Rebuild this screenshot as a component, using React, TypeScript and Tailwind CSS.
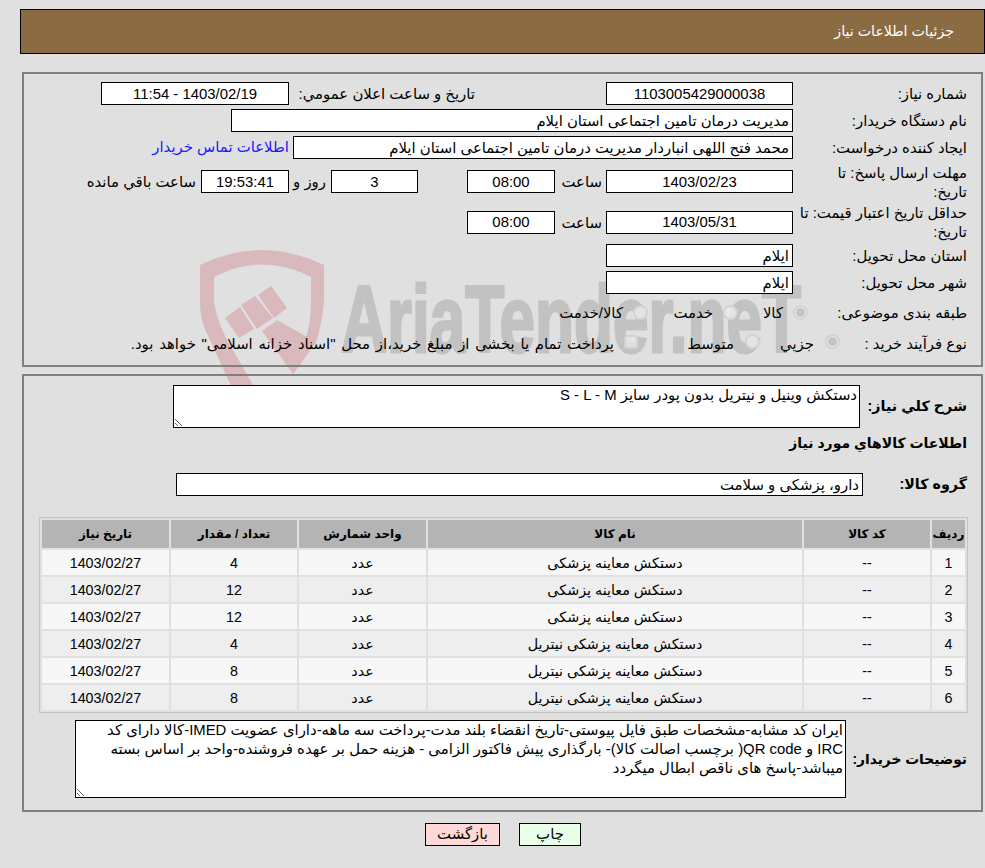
import React from 'react';

const items = [
  { id: 1, name: 'دستکش معاینه پزشکی', qty: 4 },
  { id: 2, name: 'دستکش معاینه پزشکی', qty: 12 },
  { id: 3, name: 'دستکش معاینه پزشکی', qty: 12 },
  { id: 4, name: 'دستکش معاینه پزشکی نیتریل', qty: 4 },
  { id: 5, name: 'دستکش معاینه پزشکی نیتریل', qty: 8 },
  { id: 6, name: 'دستکش معاینه پزشکی نیتریل', qty: 8 },
];

const buyerNote =
  'ایران کد مشابه-مشخصات طبق فایل پیوستی-تاریخ انقضاء بلند مدت-پرداخت سه ماهه-دارای عضویت IMED-کالا دارای کد IRC و QR code( برچسب اصالت کالا)- بارگذاری پیش فاکتور الزامی - هزینه حمل بر عهده فروشنده-واحد بر اساس بسته میباشد-پاسخ های ناقص ابطال میگردد';

function Field({ value, className = '' }: { value: string; className?: string }) {
  return (
    <input
      readOnly
      value={value}
      className={`h-[23px] border border-black bg-white px-[3px] text-black outline-none ${className}`}
    />
  );
}

function Radio({ checked = false, className = '' }: { checked?: boolean; className?: string }) {
  return (
    <span
      className={`flex h-[15px] w-[15px] shrink-0 items-center justify-center rounded-full border-2 border-[#d2d2d2] bg-[#ececec]/80 ${className}`}
    >
      {checked && <span className="h-[9px] w-[9px] rounded-full bg-[#c4c4c4]" />}
    </span>
  );
}

function Row({ label, h, children }: { label: string; h: string; children?: React.ReactNode }) {
  return (
    <div className={`flex items-center ${h}`}>
      <div className="w-[174px] shrink-0 whitespace-pre pt-[2px]">{label}</div>
      {children}
    </div>
  );
}

function Watermark() {
  return (
    <svg className="absolute left-0 top-0" width="985" height="420" viewBox="0 0 985 420">
      {/* shield */}
      <path
        d="M200 265 Q262 235 324 265 L324 300 Q322 325 316 342 L293 374 L305 340 Q311 325 311 300 L311 277 Q262 252 214 277 L214 303 Q218 325 230 345 L256 390 L233 390 L210 340 Q200 322 200 303 Z"
        fill="#d9b9bb"
      />
      {/* gavel */}
      <path d="M225 318 L240 307 L254 329 L239 338 Z" fill="#d9b9bb" />
      <path d="M241 305 L255 296 L273 318 L257 329 Z" fill="#d9b9bb" />
      <path d="M258 295 L271 286 L287 308 L274 318 Z" fill="#d9b9bb" />
      <path d="M262 331 L277 320 L316 342 L293 374 Z" fill="#d9b9bb" />
      {/* wordmark */}
      <text
        x="341"
        y="352"
        direction="ltr"
        fontFamily="'Liberation Sans', sans-serif"
        fontWeight="700"
        fontSize="94"
        fill="#c2c2c2"
        stroke="#c2c2c2"
        strokeWidth="3"
        textLength="460"
        lengthAdjust="spacingAndGlyphs"
      >
        AriaTender.neT
      </text>
    </svg>
  );
}

export default function App() {
  return (
    <div
      dir="rtl"
      className="relative h-[868px] w-[985px] overflow-hidden bg-[#e0e0e0] pt-[9px] font-['Liberation_Sans','DejaVu_Sans',sans-serif] text-[14.9px] leading-[19px] text-black"
    >
      <Watermark />

      <div className="relative">
        {/* title bar */}
        <div className="ml-[20px] flex h-[45px] items-center border border-black bg-[#8b6b42] pr-[30px] text-[14.2px] text-white">
          جزئیات اطلاعات نیاز
        </div>

        {/* need details */}
        <div className="ml-[22px] mr-[2px] mt-[18px] h-[295px] border-2 border-[#808080] pr-[14px] pt-[6px]">
          <Row label="شماره نیاز:" h="h-[27px]">
            <Field value="1103005429000038" className="w-[187px] text-center" />
            <div className="mr-[131px] w-[181px] shrink-0 whitespace-nowrap pt-[2px]">تاریخ و ساعت اعلان عمومي:</div>
            <Field value="1403/02/19 - 11:54" className="mr-[5px] w-[188px] text-center" />
          </Row>
          <Row label="نام دستگاه خریدار:" h="h-[27px]">
            <Field value="مدیریت درمان تامین اجتماعی استان ایلام" className="w-[562px]" />
          </Row>
          <Row label="ایجاد کننده درخواست:" h="h-[27px]">
            <Field value="محمد فتح اللهی انباردار مدیریت درمان تامین اجتماعی استان ایلام" className="w-[500px]" />
            <span className="mr-[4px] text-[#1a1aff]">اطلاعات تماس خریدار</span>
          </Row>
          <Row label={'مهلت ارسال پاسخ: تا\nتاریخ:'} h="h-[41px]">
            <Field value="1403/02/23" className="w-[187px] text-center" />
            <span className="mr-[4px] w-[47px] pt-[2px]">ساعت</span>
            <Field value="08:00" className="w-[88px] text-center" />
            <div className="w-[49px]" />
            <Field value="3" className="w-[87px] text-center" />
            <span className="mr-[5px] w-[37px] pt-[2px]">روز و</span>
            <Field value="19:53:41" className="w-[88px] bg-[#ffffe8] text-center" />
            <span className="mr-[5px] pt-[2px]">ساعت باقي مانده</span>
          </Row>
          <Row label={'حداقل تاریخ اعتبار قیمت: تا\nتاریخ:'} h="h-[40px]">
            <Field value="1403/05/31" className="w-[187px] text-center" />
            <span className="mr-[4px] w-[47px] pt-[2px]">ساعت</span>
            <Field value="08:00" className="w-[88px] text-center" />
          </Row>
          <Row label="استان محل تحویل:" h="h-[27px]">
            <Field value="ایلام" className="w-[187px]" />
          </Row>
          <Row label="شهر محل تحویل:" h="h-[27px]">
            <Field value="ایلام" className="w-[187px]" />
          </Row>
          <Row label="طبقه بندی موضوعی:" h="h-[32px]">
            <div className="mr-[-15px] flex items-center">
              <Radio checked />
              <span className="mr-[10px] w-[45px] pt-[3px]">کالا</span>
              <Radio />
              <span className="mr-[10px] w-[65px] pt-[3px]">خدمت</span>
              <Radio />
              <span className="mr-[10px] pt-[3px]">کالا/خدمت</span>
            </div>
          </Row>
          <Row label="نوع فرآیند خرید :" h="h-[30px]">
            <div className="mr-[-47px] flex items-center">
              <Radio checked className="mb-[3px]" />
              <span className="mr-[11px] w-[54px] pt-[2px]">جزيي</span>
              <Radio className="mb-[3px]" />
              <span className="mr-[11px] w-[96px] pt-[2px]">متوسط</span>
              <span className="mb-[3px] h-[14px] w-[14px] shrink-0 rounded-[3px] border-2 border-[#d2d2d2] bg-[#e6e6e6]/80" />
              <span className="mr-[10px] whitespace-nowrap pt-[2px] [word-spacing:1.6px]">
                پرداخت تمام یا بخشی از مبلغ خرید،از محل "اسناد خزانه اسلامی" خواهد بود.
              </span>
            </div>
          </Row>
        </div>

        {/* goods */}
        <div className="ml-[22px] mr-[2px] mt-[7px] h-[438px] border-2 border-[#808080] pt-[9px]">
          <div className="flex items-center pr-[14px]">
            <div className="w-[107px] shrink-0 whitespace-nowrap text-[14.3px] font-bold">شرح کلي نیاز:</div>
            <textarea
              readOnly
              defaultValue="دستکش وینیل و نیتریل بدون پودر سایز S - L - M"
              className="h-[43px] w-[687px] border border-black bg-white px-[2px] text-black outline-none"
            />
          </div>
          <div className="flex h-[30px] items-center pr-[14px] text-[14px] font-bold">اطلاعات کالاهاي مورد نیاز</div>
          <div className="mt-[15px] flex items-center pr-[14px]">
            <div className="w-[104px] shrink-0 text-[14.3px] font-bold">گروه کالا:</div>
            <Field value="دارو، پزشکی و سلامت" className="w-[687px]" />
          </div>

          <div className="mr-[13px] mt-[21px] w-[929px] border border-[#c4c4c4]">
            <table className="w-[927px] table-fixed border-separate border-spacing-[2px] text-center text-[14.3px]">
              <thead>
                <tr className="h-[28px] bg-[#b4b4b4] text-[12px] font-bold">
                  <th className="w-[33px]">رديف</th>
                  <th className="w-[126px]">کد کالا</th>
                  <th className="w-[374px]">نام کالا</th>
                  <th className="w-[127px]">واحد شمارش</th>
                  <th className="w-[126px]">تعداد / مقدار</th>
                  <th className="w-[127px]">تاریخ نیاز</th>
                </tr>
              </thead>
              <tbody>
                {items.map((item) => (
                  <tr key={item.id} className={`h-[25px] ${item.id % 2 === 1 ? 'bg-[#f7f7f7]' : 'bg-[#eeeeee]'}`}>
                    <td className="pt-[1px]">{item.id}</td>
                    <td className="pt-[1px]">--</td>
                    <td className="pt-[1px]">{item.name}</td>
                    <td className="pt-[1px]">عدد</td>
                    <td className="pt-[1px]">{item.qty}</td>
                    <td className="pt-[1px]">1403/02/27</td>
                  </tr>
                ))}
              </tbody>
            </table>
          </div>

          <div className="mt-[7px] flex items-center pr-[14px]">
            <div className="w-[121px] shrink-0 whitespace-nowrap text-[13.8px] font-bold">توضیحات خریدار:</div>
            <textarea
              readOnly
              defaultValue={buyerNote}
              className="h-[78px] w-[771px] border border-black bg-white px-[2px] text-black outline-none"
            />
          </div>
        </div>

        {/* actions */}
        <div className="mt-[11px] flex justify-center gap-[19px] pl-[21px]">
          <button className="h-[23px] w-[62px] border border-black bg-[#e8ffe8]">چاپ</button>
          <button className="h-[23px] w-[75px] border border-black bg-[#ffd8d8]">بازگشت</button>
        </div>
      </div>
    </div>
  );
}
